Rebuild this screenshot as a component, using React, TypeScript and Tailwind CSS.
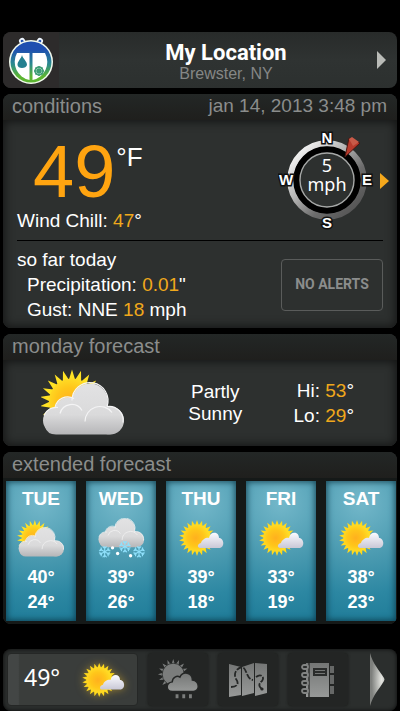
import { ReactNode } from "react";

const days = [
  { name: "TUE", hi: 40, lo: 24, icon: "partly" },
  { name: "WED", hi: 39, lo: 26, icon: "snow" },
  { name: "THU", hi: 39, lo: 18, icon: "sunny" },
  { name: "FRI", hi: 33, lo: 19, icon: "sunny" },
  { name: "SAT", hi: 38, lo: 23, icon: "sunny" },
];

// Star-shaped outline used for the sun rays
function rays(cx: number, cy: number, outer: number, inner: number, count: number) {
  const pts: string[] = [];
  for (let i = 0; i < count * 2; i++) {
    const r = i % 2 === 0 ? outer : inner;
    const a = (Math.PI * i) / count - Math.PI / 2;
    pts.push(`${(cx + r * Math.cos(a)).toFixed(2)},${(cy + r * Math.sin(a)).toFixed(2)}`);
  }
  return pts.join(" ");
}

// Gradients shared by all the icons
function IconDefs() {
  return (
    <svg width="0" height="0" className="absolute" aria-hidden="true">
      <defs>
        <radialGradient id="sun" cx="0.45" cy="0.5" r="0.6">
          <stop offset="0" stopColor="#ffb01e" />
          <stop offset="0.5" stopColor="#ffc61a" />
          <stop offset="1" stopColor="#ffe62a" />
        </radialGradient>
        <linearGradient id="cloud" gradientUnits="userSpaceOnUse" x1="0" y1="14" x2="0" y2="66">
          <stop offset="0" stopColor="#e2e2e3" />
          <stop offset="0.6" stopColor="#dadadb" />
          <stop offset="1" stopColor="#b4b4b6" />
        </linearGradient>
        <linearGradient id="puff" x1="0" y1="0" x2="0" y2="1">
          <stop offset="0" stopColor="#fbfbff" />
          <stop offset="1" stopColor="#c9c8d6" />
        </linearGradient>
        <linearGradient id="navIcon" x1="0" y1="0" x2="0" y2="1">
          <stop offset="0" stopColor="#747675" />
          <stop offset="1" stopColor="#979998" />
        </linearGradient>
      </defs>
    </svg>
  );
}

function CloudShape() {
  return (
    <g>
      <g fill="url(#cloud)">
        <circle cx="49" cy="32" r="18" />
        <circle cx="27" cy="41" r="13" />
        <circle cx="15" cy="51" r="13" />
        <circle cx="69" cy="51" r="14" />
        <circle cx="59" cy="49" r="15" />
        <path d="M6 45 H79 V58 Q76 65 67 65 H15 Q6 65 4 57 Z" />
      </g>
      <g fill="none" stroke="#f4f4f5" strokeWidth="1.2">
        <path d="M31 31 A18 18 0 1 1 66 37" />
        <path d="M14 38 A13 13 0 0 1 33 29" />
        <path d="M3 46 A13 13 0 0 1 17 38" />
        <path d="M19 44 A12 12 0 0 1 41 41" />
        <path d="M44 52 A15 15 0 0 1 71 43" />
        <path d="M66 37 A14 14 0 0 1 82 53" />
      </g>
    </g>
  );
}

function PartlySunny({ className }: { className: string }) {
  return (
    <svg viewBox="0 0 84 66" className={className} aria-hidden="true">
      <polygon points={rays(31, 32, 32, 22, 22)} fill="#ffe224" />
      <circle cx="31" cy="32" r="23" fill="url(#sun)" />
      <CloudShape />
    </svg>
  );
}

function Flake({ x, y, r }: { x: number; y: number; r: number }) {
  return (
    <g transform={`translate(${x} ${y})`} stroke="#8fe0fb" strokeWidth="2" strokeLinecap="round">
      {[0, 60, 120].map((a) => (
        <path
          key={a}
          transform={`rotate(${a})`}
          d={`M0 ${-r} V${r} M-3 ${-r} L0 ${3 - r} L3 ${-r} M-3 ${r} L0 ${r - 3} L3 ${r}`}
          fill="none"
        />
      ))}
    </g>
  );
}

function Snow({ className }: { className: string }) {
  return (
    <svg viewBox="0 13 84 71" className={className} aria-hidden="true">
      <CloudShape />
      <Flake x={13} y={73} r={9} />
      <Flake x={49} y={64} r={9} />
      <Flake x={74} y={73} r={9} />
      <circle cx="27" cy="66" r="3" fill="#fff" />
      <circle cx="36" cy="76" r="3" fill="#fff" />
      <circle cx="59" cy="80" r="3" fill="#fff" />
    </svg>
  );
}

function MostlySunny({ className }: { className: string }) {
  return (
    <svg viewBox="0 0 46 38" className={className} aria-hidden="true">
      <polygon points={rays(19, 19, 18, 13, 22)} fill="#ffd91c" />
      <circle cx="19" cy="19" r="13.5" fill="url(#sun)" />
      <path
        d="M22 29 C19 29 19 25 23 24 C24 20 29 18 31 19 C32 12 41 12 41 19 C46 19 47 28 42 29 Z"
        fill="url(#puff)"
      />
    </svg>
  );
}

function DayIcon({ icon }: { icon: string }) {
  if (icon === "partly") return <PartlySunny className="h-[37px] w-12" />;
  if (icon === "snow") return <Snow className="h-10 w-12" />;
  return <MostlySunny className="h-[38px] w-[46px]" />;
}

function Logo() {
  return (
    <svg viewBox="0 0 48 50" className="h-[50px] w-12" aria-hidden="true">
      <defs>
        <linearGradient id="bug" x1="0" y1="0" x2="0" y2="1">
          <stop offset="0.2" stopColor="#1f4fb0" />
          <stop offset="0.55" stopColor="#2b8a8f" />
          <stop offset="0.85" stopColor="#5cb531" />
        </linearGradient>
      </defs>
      <path d="M17 9 L15 6 M31 9 L33 6" stroke="#eef6ff" strokeWidth="6" strokeLinecap="round" />
      <path d="M17 9 L15 6 M31 9 L33 6" stroke="#1f4fb0" strokeWidth="2.6" strokeLinecap="round" />
      <circle cx="24" cy="27" r="22" fill="#f3fbef" />
      <circle cx="24" cy="27" r="20.5" fill="url(#bug)" />
      <path d="M10 18 H22.5 V45 A18.5 18.5 0 0 1 10 18 Z" fill="#fff" />
      <path d="M38 18 H25.5 V45 A18.5 18.5 0 0 0 38 18 Z" fill="#fff" />
      <path d="M15 20 C16 24 20 26 20 30 Q19 33 15 33 Q11 33 10.5 30 C10.5 26 14 24 15 20 Z" fill="#24808f" />
      <g stroke="#3c9c74" strokeWidth="1.5" fill="none">
        <path d="M32 31 V41 M27 36 H37 M28.500 32.500 L35.500 39.500 M35.500 32.500 L28.500 39.500" />
        <circle cx="32" cy="36" r="4" />
      </g>
    </svg>
  );
}

function Compass() {
  return (
    <svg viewBox="0 0 98 104" className="h-[104px] w-[98px]" role="img" aria-label="Wind 5 mph from the north east">
      <defs>
        <linearGradient id="ring" x1="0" y1="0" x2="1" y2="1">
          <stop offset="0.1" stopColor="#f4f4f4" />
          <stop offset="0.4" stopColor="#b4b4b4" />
          <stop offset="0.65" stopColor="#6c6c6c" />
          <stop offset="1" stopColor="#4c4c4c" />
        </linearGradient>
      </defs>
      <circle cx="49" cy="51" r="36.5" fill="none" stroke="url(#ring)" strokeWidth="6.5" />
      <circle cx="49" cy="51" r="30.5" fill="none" stroke="#000" strokeWidth="6.5" />
      <circle cx="49" cy="51" r="27" fill="none" stroke="#a5a7a6" strokeWidth="1.4" />
      <path d="M67 28 L71 9 L82 14 Z" fill="#b83a2c" stroke="#4a1610" strokeWidth="1" />
      <path d="M71 10 L74 8 L81 13 L75 17 Z" fill="#c95a48" />
      <g
        className="font-['Liberation_Sans'] text-[15px] font-bold"
        fill="#fff"
        stroke="#111"
        strokeWidth="3"
        paintOrder="stroke"
        textAnchor="middle"
      >
        <text x="49" y="14">N</text>
        <text x="49" y="99">S</text>
        <text x="8" y="56">W</text>
        <text x="89" y="56">E</text>
      </g>
      <g className="font-['Noto_Sans'] text-[18px]" fill="#fff" textAnchor="middle">
        <text x="49" y="43">5</text>
        <text x="49" y="62">mph</text>
      </g>
    </svg>
  );
}

function RainIcon() {
  return (
    <svg viewBox="0 0 46 46" className="h-11 w-11" aria-hidden="true">
      <polygon points={rays(18, 17, 16, 10, 16)} fill="#7b7d7c" />
      <circle cx="18" cy="17" r="11.5" fill="#7b7d7c" stroke="#252726" strokeWidth="0.8" />
      <path
        d="M17 35 C10 35 10 26 17 25 C17 20 22 18 25 20 C28 13 38 15 38 23 C46 24 46 35 39 35 Z"
        fill="url(#navIcon)"
        stroke="#252726"
        strokeWidth="1.5"
      />
      <path d="M22 38 V42 M29 38 V42 M36 38 V42" stroke="#7b7d7c" strokeWidth="3" />
    </svg>
  );
}

function MapIcon() {
  return (
    <svg viewBox="0 0 40 36" className="h-9 w-10" aria-hidden="true">
      <path d="M1 2 L13 5 V33 L1 35 Z M14 5 L26 1 V31 L14 34 Z M27 1 L39 2 V31 L27 34 Z" fill="url(#navIcon)" />
      <path
        d="M3 25 C10 25 11 21 8 17 C5 11 9 6 14 5 C19 6 18 17 25 18 M28 15 C33 11 37 15 34 19 C30 22 31 25 34 27"
        fill="none"
        stroke="#252726"
        strokeWidth="1.8"
        strokeDasharray="6 1.5"
      />
      <circle cx="34" cy="27" r="1.6" fill="#252726" />
    </svg>
  );
}

function NotebookIcon() {
  return (
    <svg viewBox="0 0 36 36" className="h-9 w-9" aria-hidden="true">
      <path d="M6 1 H29 V35 H6 Z" fill="url(#navIcon)" />
      <path d="M30 4 H34 V11 H30 Z M30 13 H34 V22 H30 Z M30 24 H34 V32 H30 Z" fill="#666867" />
      <path d="M13 6 H27 V14 H13 Z" fill="#2a2c2b" />
      <path d="M15 8.5 H25 M15 11.5 H25" stroke="#737574" strokeWidth="1.2" />
      <path d="M9 1 V35" stroke="#303231" strokeWidth="1.5" />
      <g fill="#2a2c2b" stroke="#828483" strokeWidth="1.8">
        {[3, 11, 19, 27].map((y) => (
          <rect key={y} x="2" y={y} width="6" height="4" rx="2" />
        ))}
      </g>
    </svg>
  );
}

function Panel({ title, aside, children }: { title: string; aside?: string; children: ReactNode }) {
  return (
    <section className="overflow-hidden rounded-lg bg-[#2d2f2e]">
      <div className="flex h-[26px] items-start justify-between bg-linear-to-b from-[#232726] to-[#1f1f1d] pr-[10px] pl-[9px] text-[#8b8d8c]">
        <h2 className="text-[20px] leading-6">{title}</h2>
        {aside && <span className="text-[19px] leading-6">{aside}</span>}
      </div>
      {children}
    </section>
  );
}

const body = "bg-[#2d302f] shadow-[inset_0_0_10px_2px_rgba(0,0,0,0.55)]";
const navButton = "flex h-[53px] w-[60px] items-center justify-center rounded bg-[#232524] shadow-[0_0_3px_#1a1b1a]";

export default function App() {
  return (
    <div className="flex min-h-screen flex-col bg-black px-[3px] pt-8 font-['Liberation_Sans',Arial,sans-serif] text-[19px] leading-[25px] text-white">
      <IconDefs />

      <main className="flex flex-col gap-[6px]">
        {/* Location header */}
        <button
          type="button"
          className="flex h-14 w-full items-center overflow-hidden rounded-lg bg-linear-to-b from-[#282b2a] via-[#2f3332] to-[#2c302f]"
        >
          <span className="flex h-14 w-14 items-center justify-center bg-[#2d2b2b]">
            <Logo />
          </span>
          <span className="flex flex-1 flex-col items-center pt-1 pl-10">
            <span className="font-['Roboto',sans-serif] text-[22px] leading-6 font-bold">My Location</span>
            <span className="text-[16px] leading-[18px] text-[#858786]">Brewster, NY</span>
          </span>
          <svg viewBox="0 0 9 18" className="mr-[11px] ml-6 h-[18px] w-[9px]" aria-hidden="true">
            <path d="M0 0 L9 9 L0 18 Z" fill="#b9bbb7" />
          </svg>
        </button>

        <Panel title="conditions" aside="jan 14, 2013 3:48 pm">
          <div className={`${body} px-[14px] pb-[6px]`}>
            <div className="flex justify-between border-b border-black pb-[7px]">
              <div>
                <div className="flex pt-4 pl-4">
                  <span className="text-[74px] leading-[72px] text-[#ffa410]">49</span>
                  <span className="pl-px text-[26px] leading-[42px]">°F</span>
                </div>
                <p>
                  Wind Chill: <span className="text-[#f0a81c]">47</span>°
                </p>
              </div>
              <button type="button" aria-label="Wind details" className="-mr-[6px] flex items-center gap-1 pt-2">
                <Compass />
                <svg viewBox="0 0 9 16" className="h-4 w-[9px]" aria-hidden="true">
                  <path d="M0 0 L9 8 L0 16 Z" fill="#f5a81c" />
                </svg>
              </button>
            </div>
            <div className="flex items-center justify-between pt-[6px]">
              <div>
                <h3>so far today</h3>
                <p className="pl-[10px]">
                  Precipitation: <span className="text-[#f0a81c]">0.01</span>"
                </p>
                <p className="pl-[10px]">
                  Gust: NNE <span className="text-[#f0a81c]">18</span> mph
                </p>
              </div>
              <button
                type="button"
                className="h-[52px] w-[102px] rounded border border-[#5a5c5b] font-['Roboto',sans-serif] text-[14px] font-bold whitespace-nowrap text-[#8b8d8c]"
              >
                NO ALERTS
              </button>
            </div>
          </div>
        </Panel>

        <Panel title="monday forecast">
          <div className={`${body} flex items-center pt-[9px] pr-[43px] pb-[10px] pl-[38px]`}>
            <PartlySunny className="h-[67px] w-[84px]" />
            <p className="flex-1 pl-3 text-center leading-[22px]">
              Partly
              <br />
              Sunny
            </p>
            <div className="text-right">
              <p>
                Hi: <span className="text-[#f0a81c]">53</span>°
              </p>
              <p>
                Lo: <span className="text-[#f0a81c]">29</span>°
              </p>
            </div>
          </div>
        </Panel>

        <Panel title="extended forecast">
          <ul className="grid grid-cols-5 gap-[10px] bg-[#151918] pt-[3px] pr-px pb-[3px] pl-[3px]">
            {days.map((day) => (
              <li
                key={day.name}
                className="flex flex-col items-center bg-[radial-gradient(circle_at_50%_15%,#74b8ca_0%,#4a9ab0_45%,#2c87a2_75%,#1f7c98_100%)] pt-[5px] pb-[6px] font-bold shadow-[inset_0_0_6px_1px_rgba(10,50,65,0.8)]"
              >
                <h3>{day.name}</h3>
                <div className="flex h-[54px] items-center">
                  <DayIcon icon={day.icon} />
                </div>
                <p className="text-[18px]">{day.hi}°</p>
                <p className="text-[18px]">{day.lo}°</p>
              </li>
            ))}
          </ul>
        </Panel>
      </main>

      {/* Bottom navigation */}
      <nav className="mt-auto flex gap-[10px] rounded-lg bg-[#2b2e2d] pt-1 pb-[5px] pl-1 shadow-[inset_0_0_4px_rgba(0,0,0,0.8)]">
        <button
          type="button"
          className="flex h-[53px] w-[131px] items-center justify-between rounded border border-[#252726] bg-linear-to-r from-[#434645] from-8% to-[#3a3d3b] to-9% pr-3 pl-4"
        >
          <span className="pb-1 font-['Noto_Sans',sans-serif] text-[23px]">49°</span>
          <MostlySunny className="h-9 w-11 drop-shadow-[0_0_4px_rgba(255,200,40,0.5)]" />
        </button>
        <button type="button" aria-label="Forecast" className={navButton}>
          <RainIcon />
        </button>
        <button type="button" aria-label="Maps" className={navButton}>
          <MapIcon />
        </button>
        <button type="button" aria-label="Journal" className={navButton}>
          <NotebookIcon />
        </button>
        <button type="button" aria-label="More" className="flex flex-1 items-center justify-end pr-3">
          <svg viewBox="0 0 15 57" preserveAspectRatio="none" className="h-[53px] w-[15px]" aria-hidden="true">
            <defs>
              <radialGradient id="more" cx="0.8" cy="0.5" r="0.7">
                <stop offset="0" stopColor="#e6e7e2" />
                <stop offset="1" stopColor="#7e807d" />
              </radialGradient>
            </defs>
            <path d="M0 0 C3 12 9 18 14 27 Q15 28.5 14 30 C9 39 3 45 0 57 Z" fill="url(#more)" />
          </svg>
        </button>
      </nav>
    </div>
  );
}
